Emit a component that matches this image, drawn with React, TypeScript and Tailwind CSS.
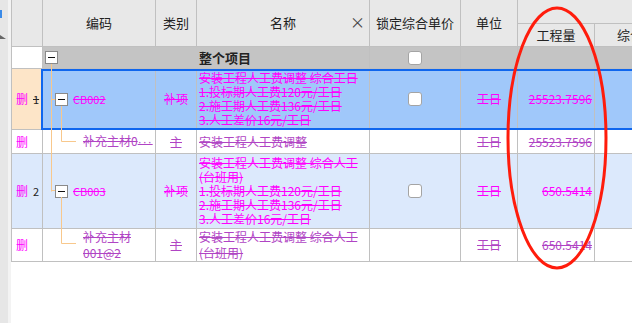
import React from "react";

const cols = "grid grid-cols-[31px_113px_41px_173px_91px_57px_77px_120px]";
const bd = "border-r border-b border-[#c0c0c0]";
const MAG = "text-[#ff00ff] decoration-[#ff00ff]";
const PUR = "text-[#b044c4] decoration-[#b044c4]";

function MinusBox() {
  return (
    <span className="flex h-[13px] w-[13px] shrink-0 items-center justify-center border border-[#8a8a8a] bg-white">
      <span className="h-px w-[7px] bg-[#111]" />
    </span>
  );
}

function Check() {
  return <span className="block h-[14px] w-[14px] rounded-[3px] border border-[#a4a4a4] bg-white" />;
}

function Lines({ items, color, leading = "leading-[14px]" }: { items: string[]; color: string; leading?: string }) {
  return (
    <div className={`flex flex-col justify-center overflow-hidden pl-[2px] ${leading} ${bd}`}>
      {items.map((t, i) => (
        <span key={i} className={`whitespace-nowrap line-through ${color}`}>
          {t}
        </span>
      ))}
    </div>
  );
}

function Header() {
  return (
    <div className={`${cols} grid-rows-[24px_23px] bg-[#e8e8e8] text-[13px] text-[#222]`}>
      <div className={`row-span-2 ${bd}`} />
      <div className={`row-span-2 flex items-center justify-center ${bd}`}>编码</div>
      <div className={`row-span-2 flex items-center justify-center ${bd}`}>类别</div>
      <div className={`relative row-span-2 flex items-center justify-center ${bd}`}>
        名称
        <span className="absolute right-[4px] top-[13px] text-[15px] leading-[18px] text-[#444]">×</span>
      </div>
      <div className={`row-span-2 flex items-center justify-center ${bd}`}>锁定综合单价</div>
      <div className={`row-span-2 flex items-center justify-center ${bd}`}>单位</div>
      <div className={`col-span-2 ${bd}`} />
      <div className={`flex items-center justify-center ${bd}`}>工程量</div>
      <div className={`flex items-center overflow-hidden whitespace-nowrap pl-[22px] ${bd}`}>综合单价</div>
    </div>
  );
}

export default function App() {
  return (
    <div className="relative flex h-[323px] w-[632px] overflow-hidden bg-white font-['Noto_Sans_CJK_SC',sans-serif] text-[12px]">
      <div className="flex w-[11px] shrink-0">
        <div className="relative w-[8px] bg-[#e6e6e6]">
          <span className="absolute left-0 top-[10px] h-[8px] w-[2px] bg-[#3a8ae8]" />
          <svg className="absolute left-0 top-[34px]" width="6" height="6" viewBox="0 0 6 6">
            <polygon points="0,1 6,5 0,5" fill="#666" />
          </svg>
        </div>
        <div className="w-[3px] bg-[#f3f3f3]" />
      </div>

      <div className="flex-1 overflow-hidden">
        <div className="w-[705px] border-l border-[#c0c0c0]">
          <Header />

          {/* 整个项目 */}
          <div className={`${cols} h-[22px] bg-[#c4c4c4]`}>
            <div className={`${bd} bg-white`} />
            <div className="flex items-center border-b border-[#c0c0c0] pl-[2px]">
              <MinusBox />
            </div>
            <div className="border-b border-[#c0c0c0]" />
            <div className={`flex items-center pl-[2px] text-[13px] font-bold text-[#222] ${bd}`}>整个项目</div>
            <div className={`flex items-center justify-center ${bd}`}>
              <Check />
            </div>
            <div className={bd} />
            <div className={bd} />
            <div className={bd} />
          </div>

          {/* row 1 */}
          <div className={`relative ${cols} h-[61px] bg-[#a0c8fa]`}>
            <div className={`flex items-center bg-[#fde5c8] pl-[4px] ${bd}`}>
              <span className="text-[#ff00ff]">删</span>
              <span className="ml-[5px] text-[11px] text-[#222] line-through">1</span>
            </div>
            <div className={`flex items-center pl-[12px] ${bd}`}>
              <MinusBox />
              <span className={`ml-[5px] text-[11px] line-through ${MAG}`}>CB002</span>
            </div>
            <div className={`flex items-center justify-center ${bd}`}>
              <span className={`line-through ${MAG}`}>补项</span>
            </div>
            <Lines
              color={MAG}
              items={["安装工程人工费调整 综合工日", "1.投标期人工费120元/工日", "2.施工期人工费136元/工日", "3.人工差价16元/工日"]}
            />
            <div className={`flex items-center justify-center ${bd}`}>
              <Check />
            </div>
            <div className={`flex items-center justify-center ${bd}`}>
              <span className={`line-through ${MAG}`}>工日</span>
            </div>
            <div className={`flex items-center justify-end pr-[2px] ${bd}`}>
              <span className={`line-through ${MAG}`}>25523.7596</span>
            </div>
            <div className={bd} />
            <div className="pointer-events-none absolute bottom-0 left-[29px] right-0 top-0 border-2 border-[#0f66ee]" />
          </div>

          {/* row 2 */}
          <div className={`${cols} h-[24px] bg-white`}>
            <div className={`flex items-center pl-[4px] ${bd}`}>
              <span className="text-[#ff00ff]">删</span>
            </div>
            <div className={`flex items-center overflow-hidden pl-[40px] ${bd}`}>
              <span className={`whitespace-nowrap line-through ${PUR}`}>
                补充主材0<span className="font-['Liberation_Sans',sans-serif] tracking-[1px]">···</span>
              </span>
            </div>
            <div className={`flex items-center justify-center ${bd}`}>
              <span className={`line-through ${PUR}`}>主</span>
            </div>
            <Lines color={PUR} items={["安装工程人工费调整"]} />
            <div className={bd} />
            <div className={`flex items-center justify-center ${bd}`}>
              <span className={`line-through ${PUR}`}>工日</span>
            </div>
            <div className={`flex items-center justify-end pr-[2px] ${bd}`}>
              <span className={`line-through ${PUR}`}>25523.7596</span>
            </div>
            <div className={bd} />
          </div>

          {/* row 3 */}
          <div className={`${cols} h-[75px] bg-[#dce9fc]`}>
            <div className={`flex items-center pl-[4px] ${bd}`}>
              <span className="text-[#ff00ff]">删</span>
              <span className="ml-[5px] text-[11px] text-[#222]">2</span>
            </div>
            <div className={`flex items-center pl-[12px] ${bd}`}>
              <MinusBox />
              <span className={`ml-[5px] text-[11px] line-through ${MAG}`}>CB003</span>
            </div>
            <div className={`flex items-center justify-center ${bd}`}>
              <span className={`line-through ${MAG}`}>补项</span>
            </div>
            <Lines
              color={MAG}
              items={[
                "安装工程人工费调整 综合人工",
                "(台班用)",
                "1.投标期人工费120元/工日",
                "2.施工期人工费136元/工日",
                "3.人工差价16元/工日",
              ]}
            />
            <div className={`flex items-center justify-center ${bd}`}>
              <Check />
            </div>
            <div className={`flex items-center justify-center ${bd}`}>
              <span className={`line-through ${MAG}`}>工日</span>
            </div>
            <div className={`flex items-center justify-end pr-[2px] ${bd}`}>
              <span className={`line-through ${MAG}`}>650.5414</span>
            </div>
            <div className={bd} />
          </div>

          {/* row 4 */}
          <div className={`${cols} h-[33px] bg-white`}>
            <div className={`flex items-center pl-[4px] ${bd}`}>
              <span className="text-[#ff00ff]">删</span>
            </div>
            <div className={`flex flex-col justify-center pl-[40px] leading-[16px] ${bd}`}>
              <span className={`line-through ${PUR}`}>补充主材</span>
              <span className={`line-through ${PUR}`}>001@2</span>
            </div>
            <div className={`flex items-center justify-center ${bd}`}>
              <span className={`line-through ${PUR}`}>主</span>
            </div>
            <Lines color={PUR} leading="leading-[16px]" items={["安装工程人工费调整 综合人工", "(台班用)"]} />
            <div className={bd} />
            <div className={`flex items-center justify-center ${bd}`}>
              <span className={`line-through ${PUR}`}>工日</span>
            </div>
            <div className={`flex items-center justify-end pr-[2px] ${bd}`}>
              <span className={`line-through ${PUR}`}>650.5414</span>
            </div>
            <div className={bd} />
          </div>
        </div>
      </div>

      {/* tree connectors and the red annotation */}
      <svg className="pointer-events-none absolute left-0 top-0" width="632" height="323" viewBox="0 0 632 323">
        <g stroke="#f8c88c" strokeWidth="1" fill="none">
          <path d="M51.5 64 V191.5 M51 99.5 H55 M51 190.5 H55" />
          <path d="M61.5 106 V141.5 H76" />
          <path d="M61.5 197 V243.5 H76" />
        </g>
        <ellipse cx="557" cy="138" rx="49" ry="130" stroke="#ff1c0c" strokeWidth="3" fill="none" />
      </svg>
    </div>
  );
}
